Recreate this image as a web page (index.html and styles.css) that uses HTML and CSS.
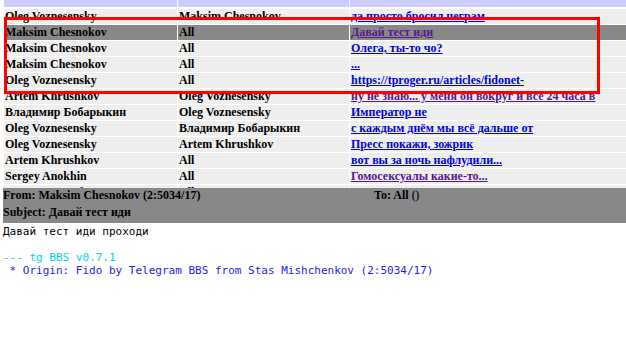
FILE: index.html
```html
<!DOCTYPE html>
<html lang="ru">
<head>
    <meta charset="UTF-8">
    <title>tg BBS</title>
    <link rel="stylesheet" href="styles.css">
</head>
<body>
    <div class="msg-list">
        <table class="msg-table">
            <colgroup>
                <col class="col-from">
                <col class="col-to">
                <col>
            </colgroup>
            <tr class="head-row"><th>From</th><th>To</th><th>Subject</th></tr>
            <tr><td>Oleg Voznesensky</td><td>Maksim Chesnokov</td><td><a href="#">да просто бросил неграм</a></td></tr>
            <tr class="selected"><td>Maksim Chesnokov</td><td>All</td><td><a class="visited" href="#">Давай тест иди</a></td></tr>
            <tr><td>Maksim Chesnokov</td><td>All</td><td><a href="#">Олега, ты-то чо?</a></td></tr>
            <tr><td>Maksim Chesnokov</td><td>All</td><td><a href="#">...</a></td></tr>
            <tr><td>Oleg Voznesensky</td><td>All</td><td><a href="#">https://tproger.ru/articles/fidonet-</a></td></tr>
            <tr><td>Artem Khrushkov</td><td>Oleg Voznesensky</td><td><a class="visited" href="#">ну не знаю... у меня он вокруг и все 24 часа в</a></td></tr>
            <tr><td>Владимир Бобарыкин</td><td>Oleg Voznesensky</td><td><a href="#">Император не</a></td></tr>
            <tr><td>Oleg Voznesensky</td><td>Владимир Бобарыкин</td><td><a href="#">с каждым днём мы всё дальше от</a></td></tr>
            <tr><td>Oleg Voznesensky</td><td>Artem Khrushkov</td><td><a href="#">Пресс покажи, зожрик</a></td></tr>
            <tr><td>Artem Khrushkov</td><td>All</td><td><a href="#">вот вы за ночь нафлудили...</a></td></tr>
            <tr><td>Sergey Anokhin</td><td>All</td><td><a class="visited" href="#">Гомосексуалы какие-то...</a></td></tr>
            <tr><td>Владимир Бобарыкин</td><td>All</td><td><a href="#">...</a></td></tr>
        </table>
        <div class="highlight-box"></div>
    </div>

    <div class="msg-header">
        <div>From: Maksim Chesnokov (2:5034/17)</div>
        <div>To: All <span class="addr">()</span></div>
        <div class="subject">Subject: Давай тест иди</div>
    </div>

    <pre class="msg-body">Давай тест иди проходи

<span class="tearline">--- tg BBS v0.7.1</span>
<span class="origin"> * Origin: Fido by Telegram BBS from Stas Mishchenkov (2:5034/17)</span></pre>
</body>
</html>
```

FILE: styles.css
```css
body {
    margin: 0;
    background-color: #fff;
    font-family: "Liberation Serif", "Times New Roman", serif;
    overflow: hidden;
}
.msg-list {
    position: relative;
    height: 188px;
    overflow: hidden;
    padding-left: 3px;
}
.msg-table {
    table-layout: fixed;
    width: 760px;
    border-collapse: separate;
    border-spacing: 1px;
    margin-top: -24px;
    font-size: 12px;
    font-weight: bold;
}
.col-from {
    width: 173px;
}
.col-to {
    width: 171px;
}
.msg-table td,
.msg-table th {
    height: 15px;
    padding: 0 0 0 1px;
    line-height: 15px;
    background-color: #eee;
    text-align: left;
    white-space: nowrap;
    overflow: hidden;
}
.head-row th {
    height: 30px;
    vertical-align: top;
    background-color: #ccf;
    border-bottom: 1px solid #fff;
}
.msg-table tr.selected td {
    background-color: #888;
}
.msg-table a {
    color: #00e;
}
.msg-table a.visited {
    color: #551a8b;
}
.highlight-box {
    position: absolute;
    left: 4px;
    top: 17px;
    width: 590px;
    height: 71px;
    border: 3px solid #f00;
}
.msg-header {
    display: grid;
    grid-template-columns: 371px 1fr;
    row-gap: 2px;
    margin-left: 3px;
    padding-bottom: 3px;
    background-color: #888;
    font-size: 12px;
    font-weight: bold;
    line-height: 15px;
}
.msg-header .subject {
    grid-column: 1 / 3;
}
.addr {
    color: #123;
}
.msg-body {
    margin: 2px 0 0 3px;
    font-family: "DejaVu Sans Mono", "Liberation Mono", monospace;
    font-size: 11px;
    line-height: 13px;
}
.tearline {
    color: #00d0f0;
}
.origin {
    color: #2222ee;
}
```
